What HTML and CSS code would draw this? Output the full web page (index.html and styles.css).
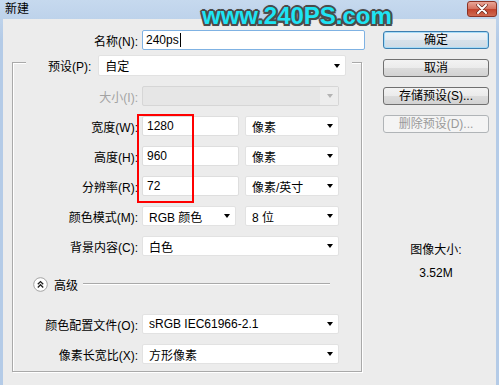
FILE: index.html
```html
<!DOCTYPE html>
<html lang="zh-CN">
<head>
  <meta charset="UTF-8" />
  <title>新建</title>
  <link rel="stylesheet" href="styles.css">
</head>
<body>
  <div class="window">
    <div class="titlebar">
      <span class="title">新建</span>
      <div class="close">
        <svg width="14" height="10" viewBox="0 0 14 10">
          <path d="M3 1 L11 9 M11 1 L3 9" stroke="#6b2a20" stroke-width="3.4" stroke-linecap="round"/>
          <path d="M3 1 L11 9 M11 1 L3 9" stroke="#fff" stroke-width="2" stroke-linecap="round"/>
        </svg>
      </div>
    </div>

    <div class="client">
      <div class="main">
        <div class="name-row">
          <span class="lbl">名称(N):</span>
          <div class="field focus">240ps<span class="caret"></span></div>
        </div>

        <div class="group">
          <div class="preset-row">
            <span class="preset-lbl">预设(P):</span>
            <div class="select preset">自定<span class="arrow"></span></div>
          </div>

          <div class="row">
            <span class="lbl off">大小(I):</span>
            <div class="select disabled w-full"><span class="drop-btn"><span class="arrow"></span></span></div>
          </div>
          <div class="row">
            <span class="lbl">宽度(W):</span>
            <div class="field w-num">1280</div>
            <div class="select w-unit">像素<span class="arrow"></span></div>
          </div>
          <div class="row">
            <span class="lbl">高度(H):</span>
            <div class="field w-num">960</div>
            <div class="select w-unit">像素<span class="arrow"></span></div>
          </div>
          <div class="row">
            <span class="lbl">分辨率(R):</span>
            <div class="field w-num">72</div>
            <div class="select w-unit">像素/英寸<span class="arrow"></span></div>
          </div>
          <div class="row">
            <span class="lbl">颜色模式(M):</span>
            <div class="select w-mode">RGB 颜色<span class="arrow"></span></div>
            <div class="select w-bits">8 位<span class="arrow"></span></div>
          </div>
          <div class="row">
            <span class="lbl">背景内容(C):</span>
            <div class="select w-full">白色<span class="arrow"></span></div>
          </div>

          <div class="advanced">
            <svg class="adv-icon" width="15" height="15" viewBox="0 0 15 15">
              <circle cx="7.5" cy="7.5" r="6.8" fill="#fff" stroke="#a3a3a3"/>
              <polyline points="4.8,7.2 7.5,4.6 10.2,7.2" fill="none" stroke="#222" stroke-width="1.4"/>
              <polyline points="4.8,10.4 7.5,7.8 10.2,10.4" fill="none" stroke="#222" stroke-width="1.4"/>
            </svg>
            <span class="adv-text">高级</span>
            <span class="adv-line"></span>
          </div>

          <div class="row profile">
            <span class="lbl">颜色配置文件(O):</span>
            <div class="select w-full">sRGB IEC61966-2.1<span class="arrow"></span></div>
          </div>
          <div class="row">
            <span class="lbl">像素长宽比(X):</span>
            <div class="select w-full">方形像素<span class="arrow"></span></div>
          </div>
        </div>
      </div>

      <div class="side">
        <div class="btn default">确定</div>
        <div class="btn">取消</div>
        <div class="btn">存储预设(S)...</div>
        <div class="btn disabled">删除预设(D)...</div>
        <div class="info">
          <div>图像大小:</div>
          <div>3.52M</div>
        </div>
      </div>
    </div>

    <div class="watermark">www.240PS.com</div>
    <div class="highlight"></div>
  </div>
</body>
</html>
```

FILE: styles.css
```css
* {
  box-sizing: border-box;
}

body {
  margin: 0;
  font-family: "Liberation Sans", "Noto Sans CJK SC", sans-serif;
  font-size: 12px;
  color: #000;
}

.window {
  position: relative;
  width: 499px;
  height: 385px;
  overflow: hidden;
  background: linear-gradient(#c6d9ee, #b4cbe7 40px);
}

/* title bar */
.titlebar {
  height: 19px;
  display: flex;
  align-items: flex-start;
  padding-left: 5px;
}
.title {
  margin-top: 3px;
  line-height: 13px;
}
.close {
  margin-left: auto;
  margin-right: 2px;
  margin-top: 1px;
  width: 30px;
  height: 16px;
  border: 1px solid #8c3325;
  border-radius: 3px;
  background: linear-gradient(#e9a698, #d4705d 50%, #c2432c 51%, #cf6a52);
  display: flex;
  align-items: center;
  justify-content: center;
}

/* client area */
.client {
  margin: 0 3px;
  height: 366px;
  background: #ececec;
  display: flex;
  padding-left: 9px;
}
.main {
  width: 354px;
}

.name-row {
  margin-top: 11px;
  display: flex;
  align-items: center;
  height: 20px;
}
.name-row .lbl {
  width: 126px;
  margin-right: 4px;
  text-align: right;
}

.field {
  height: 20px;
  background: #fff;
  border: 1px solid #dedede;
  border-radius: 2px;
  padding-left: 4px;
  display: flex;
  align-items: center;
}
.name-row .field {
  width: 223px;
}
.field.focus {
  border-color: #7fb2e3;
  padding-left: 3px;
}
.caret {
  width: 1px;
  height: 14px;
  background: #000;
  margin-left: 1px;
}

/* group box */
.group {
  margin-top: 12px;
  width: 350px;
  height: 310px;
  border: 1px solid #a9a9a9;
  box-shadow: inset 1px 1px 0 #fff, 1px 1px 0 #fff;
  display: flex;
  flex-direction: column;
}

.preset-row {
  margin: -8px 0 0 13px;
  width: 326px;
  height: 21px;
  padding-left: 22px;
  background: #ececec;
  display: flex;
  align-items: center;
}
.preset-lbl {
  margin-right: 7px;
}

.row {
  margin-top: 10px;
  height: 20px;
  display: flex;
  align-items: center;
}
.row .lbl {
  width: 125px;
  margin-right: 4px;
  text-align: right;
  white-space: nowrap;
}
.lbl.off {
  color: #a3a3a3;
}

.select {
  position: relative;
  height: 20px;
  background: #fff;
  border: 1px solid #e2e2e2;
  border-radius: 2px;
  padding-left: 6px;
  display: flex;
  align-items: center;
}
.select.preset {
  width: 248px;
  height: 21px;
}
.arrow {
  margin-left: auto;
  margin-right: 5px;
  width: 0;
  height: 0;
  border-left: 3.5px solid transparent;
  border-right: 3.5px solid transparent;
  border-top: 4px solid #000;
}
.select.disabled {
  background: #e6e6e6;
  border-color: #d6d6d6;
  padding-left: 0;
}
.drop-btn {
  margin-left: auto;
  width: 18px;
  height: 18px;
  background: #ededed;
  display: flex;
  align-items: center;
}
.select.disabled .arrow {
  border-top-color: #b4b4b4;
}

.w-full {
  width: 197px;
}
.w-num {
  width: 97px;
}
.w-unit {
  width: 94px;
  margin-left: 6px;
}
.w-mode {
  width: 94px;
}
.w-bits {
  width: 94px;
  margin-left: 9px;
}

/* advanced toggle */
.advanced {
  margin-top: 20px;
  height: 16px;
  display: flex;
  align-items: center;
  padding-left: 20px;
}
.adv-text {
  margin-left: 6px;
}
.adv-line {
  margin-left: 5px;
  width: 247px;
  height: 2px;
  border-top: 1px solid #a9a9a9;
  border-bottom: 1px solid #fff;
}
.row.profile {
  margin-top: 22px;
}

/* right column */
.side {
  margin-left: 17px;
  width: 106px;
  padding-top: 12px;
}
.btn {
  height: 18px;
  margin-bottom: 10px;
  border: 1px solid #707070;
  border-radius: 3px;
  background: linear-gradient(#f3f3f3, #ebebeb 50%, #dcdcdc 51%, #d2d2d2);
  text-align: center;
  line-height: 16px;
}
.btn.default {
  border-color: #3c7fb1;
  box-shadow: inset 0 0 0 1px #a6dcf8;
  background: linear-gradient(#eef4f8, #e3ebf2 50%, #d7e1ea 51%, #cfdbe6);
}
.btn.disabled {
  border-color: #b0b4b7;
  background: #f4f4f4;
  color: #9a9a9a;
}
.info {
  margin-top: 106px;
  text-align: center;
  line-height: 23px;
}

/* overlays */
.watermark {
  position: absolute;
  left: 202px;
  top: 2px;
  font-family: "Liberation Sans", sans-serif;
  font-weight: bold;
  font-size: 24px;
  color: #1ee4f4;
  text-shadow:
    -2px 0 0 #4b4b4b, 2px 0 0 #4b4b4b, 0 -2px 0 #4b4b4b, 0 2px 0 #4b4b4b,
    -1.5px -1.5px 0 #4b4b4b, 1.5px -1.5px 0 #4b4b4b, -1.5px 1.5px 0 #4b4b4b, 1.5px 1.5px 0 #4b4b4b,
    0 0 3px #555;
}
.highlight {
  position: absolute;
  left: 137px;
  top: 114px;
  width: 57px;
  height: 89px;
  border: 2px solid #f00;
}
```
